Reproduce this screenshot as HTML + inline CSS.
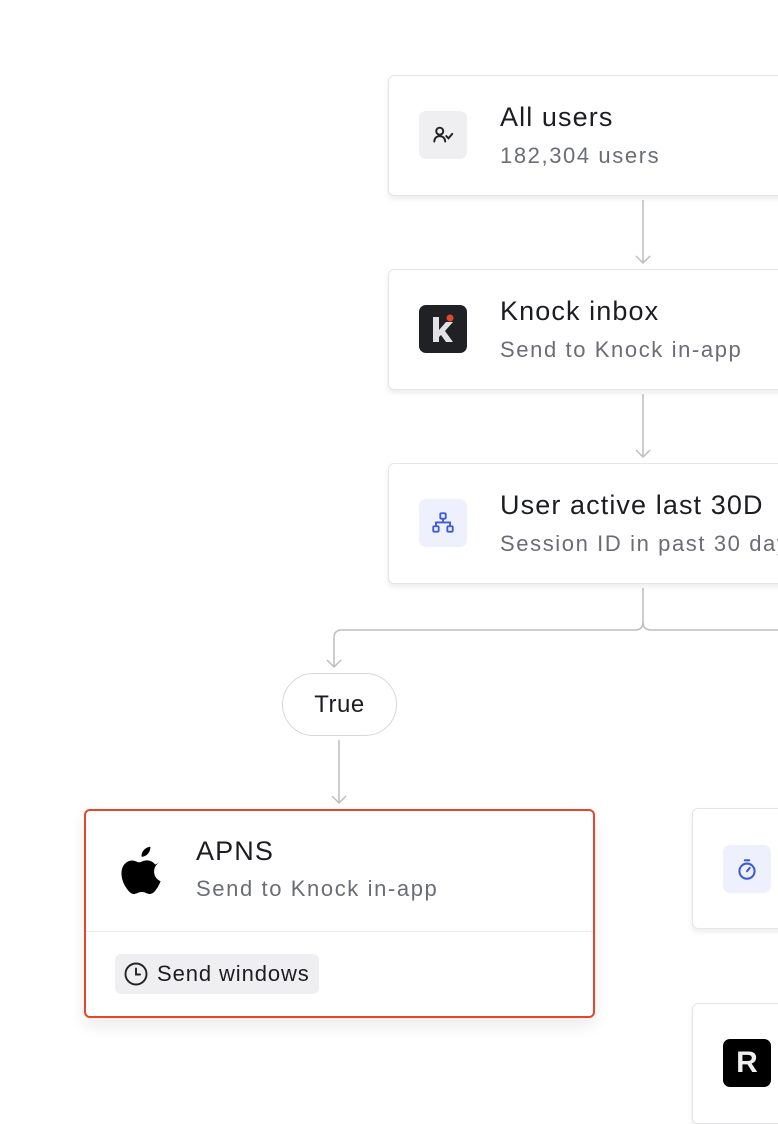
<!DOCTYPE html>
<html><head><style>
*{margin:0;padding:0;box-sizing:border-box}
body{width:778px;height:1100px;background:#fff;position:relative;overflow:hidden;font-family:"Liberation Sans",sans-serif;color:#1c1d21}
.card{position:absolute;background:#fff;border:1px solid #e6e6e8;border-radius:6px;box-shadow:0 3px 6px rgba(0,0,0,.08)}
.ic{position:absolute;width:48px;height:48px;border-radius:7px;display:flex;align-items:center;justify-content:center}
.t{position:absolute;font-size:27px;letter-spacing:1.1px;white-space:nowrap;color:#1c1d21}
.s{position:absolute;font-size:22px;letter-spacing:1.6px;white-space:nowrap;color:#6b6d75}
</style></head><body>
<svg width="778" height="1100" style="position:absolute;left:0;top:0" fill="none" stroke="#bdbec3" stroke-width="1.5">
<path d="M643 200V263M636 256l7 7 7-7"/>
<path d="M643 394V457M636 450l7 7 7-7"/>
<path d="M643 588V622q0 8-8 8H342q-8 0-8 8V667M327 660l7 7 7-7"/>
<path d="M643 622q0 8 8 8H778"/>
<path d="M339 740V803M332 796l7 7 7-7"/>
</svg>

<div class="card" style="left:388px;top:75px;width:420px;height:121px">
 <div class="ic" style="left:30px;top:35px;background:#efeff1">
  <svg width="24" height="24" viewBox="0 0 22 22" fill="none" stroke="#222" stroke-width="1.8" stroke-linecap="round"><circle cx="8" cy="7.5" r="3.2"/><path d="M3 17c0-3 2.2-5 5-5s5 2 5 5"/><path d="M14 12l2 2 3.5-4"/></svg>
 </div>
 <div class="t" style="left:111px;top:26px">All users</div>
 <div class="s" style="left:111px;top:67px">182,304 users</div>
</div>

<div class="card" style="left:388px;top:269px;width:420px;height:121px">
 <div class="ic" style="left:30px;top:35px;background:#1f2124">
  <svg width="48" height="48" viewBox="0 0 48 48"><path d="M14 12h6v13l7-8h7l-8 9 8 11h-7l-5-7-2 2v5h-6z" fill="#e2e2e4"/><circle cx="31" cy="13" r="3.5" fill="#e5462a"/></svg>
 </div>
 <div class="t" style="left:111px;top:26px">Knock inbox</div>
 <div class="s" style="left:111px;top:67px">Send to Knock in-app</div>
</div>

<div class="card" style="left:388px;top:463px;width:420px;height:121px">
 <div class="ic" style="left:30px;top:35px;background:#eef1fd">
  <svg width="26" height="26" viewBox="0 0 24 24" fill="none" stroke="#3d5bd6" stroke-width="1.7"><rect x="9.5" y="3" width="5" height="5" rx=".8"/><rect x="3" y="15" width="5" height="5" rx=".8"/><rect x="16" y="15" width="5" height="5" rx=".8"/><path d="M12 8v3.5M5.5 15v-3.5h13V15"/></svg>
 </div>
 <div class="t" style="left:111px;top:26px">User active last 30D</div>
 <div class="s" style="left:111px;top:67px">Session ID in past 30 days</div>
</div>

<div style="position:absolute;left:282px;top:673px;width:115px;height:63px;border:1.5px solid #d6d7da;border-radius:32px;display:flex;align-items:center;justify-content:center;font-size:24px;letter-spacing:.5px;background:#fff">True</div>

<div class="card" style="left:84px;top:809px;width:511px;height:209px;border:2px solid #e5462a;box-shadow:0 8px 16px rgba(0,0,0,.08)">
 <svg style="position:absolute;left:35px;top:35px" width="40" height="48" viewBox="0 0 814 1000"><path fill="#000" d="M788 341c-6 4-108 62-108 190 0 148 130 201 134 202-1 3-21 72-69 142-43 62-88 124-156 124s-86-40-165-40c-77 0-104 41-167 41s-107-58-157-128C42 790 0 676 0 568c0-174 113-266 224-266 59 0 108 39 145 39 35 0 90-41 157-41 25 0 117 2 177 88zM554 159c28-33 48-79 48-125 0-6-1-13-2-18-46 2-100 30-133 68-26 29-50 75-50 122 0 7 1 14 2 16 3 1 8 1 13 1 41 0 93-28 122-64z"/></svg>
 <div class="t" style="left:110px;top:25px">APNS</div>
 <div class="s" style="left:110px;top:65px">Send to Knock in-app</div>
 <div style="position:absolute;left:0;right:0;top:120px;border-top:1.5px solid #ececee"></div>
 <div style="position:absolute;left:29px;top:143px;width:204px;height:40px;background:#efeff1;border-radius:6px;display:flex;align-items:center;padding-left:8px;font-size:22px;letter-spacing:.9px;color:#1c1d21">
  <svg width="26" height="26" viewBox="0 0 26 26" fill="none" stroke="#222" stroke-width="1.9" stroke-linecap="round" style="margin-right:8px"><circle cx="13" cy="13" r="10.5"/><path d="M13 7.5V13.5H17"/></svg>Send windows
 </div>
</div>

<div class="card" style="left:692px;top:808px;width:120px;height:121px">
 <div class="ic" style="left:30px;top:36px;background:#eef1fd">
  <svg width="26" height="26" viewBox="0 0 24 24" fill="none" stroke="#3d5bd6" stroke-width="1.9" stroke-linecap="round"><circle cx="12" cy="14" r="7"/><path d="M10 4h4M12 14l2.5-3"/></svg>
 </div>
</div>
<div class="card" style="left:692px;top:1003px;width:120px;height:121px">
 <div class="ic" style="left:30px;top:35px;background:#000;color:#f0f0f0;font-weight:bold;font-size:30px">R</div>
</div>
</body></html>
